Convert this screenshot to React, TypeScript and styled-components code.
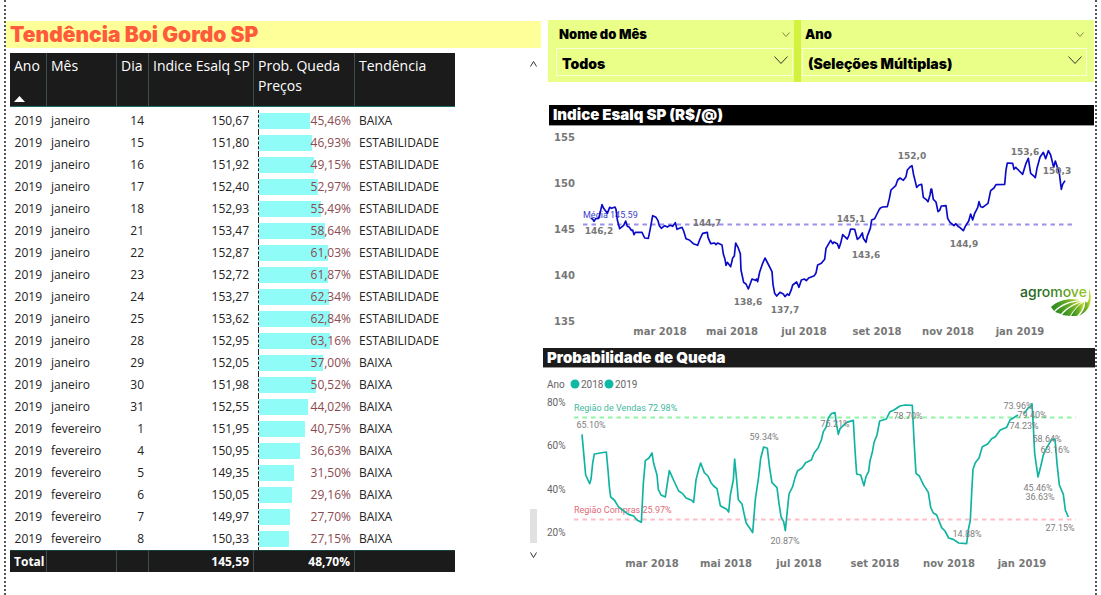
import React from "react";
import styled, { createGlobalStyle } from "styled-components";

const GlobalStyle = createGlobalStyle`
  *, *::before, *::after { box-sizing: border-box; }
  body { margin: 0; background: #fff; font-family: "Open Sans", "Noto Sans", sans-serif; }
`;

const HEAVY = '"Inter", "Liberation Sans", sans-serif';
const WIDE = '"DejaVu Sans", "Inter", sans-serif';
const DIN = '"Roboto", "Liberation Sans", sans-serif';

const Page = styled.main`
  display: grid;
  grid-template-columns: 537fr 552fr;
  min-height: 100vh;
  margin: 0 4px;
  padding-top: 20px;
  border-left: 2px dotted #555;
  border-right: 2px dotted #555;
`;

const Column = styled.section`
  min-width: 0;
`;

const ReportTitle = styled.h1`
  margin: 1px 2px 5px 0;
  padding-left: 4px;
  background: #ffff99;
  color: #ff5a3c;
  font: 900 21px/27px ${HEAVY};
`;

const TableArea = styled.div`
  display: flex;
  padding-left: 4px;
`;

const Table = styled.table`
  flex: 1;
  width: 100%;
  min-width: 0;
  table-layout: fixed;
  border-collapse: separate;
  border-spacing: 0;
  font-size: 12px;
  line-height: 20px;
  color: #222;
`;

const HeadCell = styled.th`
  height: 54px;
  padding: 3px 4px 0;
  vertical-align: top;
  text-align: left;
  white-space: nowrap;
  font-weight: 400;
  font-size: 14px;
  color: #fff;
  background: #1b1b1b;
  border-right: 1px solid #3f4f4f;
  border-bottom: 1px solid #1f6f6a;
  &:last-child { border-right: 0; }
`;

const SortMark = styled.svg`
  display: block;
  margin-top: 20px;
`;

const Cell = styled.td<{ $align?: string }>`
  height: 22px;
  padding: 0 5px 0 4px;
  text-align: ${(p) => p.$align ?? "left"};
  white-space: nowrap;
`;

const Spacer = styled.td`
  height: 3px;
  padding: 0;
`;

const BarCell = styled.td`
  padding: 0 4px;
  height: 22px;
`;

const BarTrack = styled.div`
  display: grid;
  align-items: center;
  height: 22px;
  border-left: 1px dashed #222;
  > * { grid-area: 1 / 1; }
`;

const Bar = styled.span`
  height: 16px;
  background: #8ffcf8;
`;

const BarValue = styled.span`
  text-align: right;
  color: #8c4a50;
`;

const FootCell = styled.td<{ $align?: string }>`
  height: 22px;
  padding: 0 4px;
  text-align: ${(p) => p.$align ?? "left"};
  font-weight: 700;
  color: #fff;
  background: #1b1b1b;
  border-right: 1px solid #3f4f4f;
  border-top: 1px solid #16423f;
  &:last-child { border-right: 0; }
`;

const ScrollGutter = styled.div`
  display: flex;
  flex: none;
  flex-direction: column;
  align-items: flex-end;
  width: 88px;
  padding: 8px 6px 14px 0;
`;

const ScrollThumb = styled.div`
  width: 7px;
  height: 34px;
  margin: auto 0 9px;
  background: #e1e1e1;
`;

const Slicers = styled.div`
  display: grid;
  grid-template-columns: 246fr 7px 293fr;
  margin: 0 1px 23px 5px;
  background: #eaff88;
`;

const Divider = styled.div`
  background: #d3f23f;
`;

const Slicer = styled.div<{ $left: number; $right: number }>`
  min-width: 0;
  padding: 4px ${(p) => p.$right}px 6px ${(p) => p.$left}px;
`;

const SlicerLabel = styled.label`
  display: flex;
  align-items: center;
  justify-content: space-between;
  height: 20px;
  padding: 0 3px;
  font: 900 13px/20px ${HEAVY};
`;

const SelectBox = styled.div`
  display: grid;
  align-items: center;
  height: 28px;
  margin-top: 4px;
  border: 1px solid #f7ffd6;
  > * { grid-area: 1 / 1; }
  > svg { justify-self: end; margin: 0 4px 4px 0; pointer-events: none; }
`;

const Select = styled.select`
  appearance: none;
  width: 100%;
  height: 26px;
  padding: 2px 24px 0 5px;
  border: 0;
  background: transparent;
  color: #000;
  font: 900 14px ${HEAVY};
`;

const PanelTitle = styled.h2<{ $soft?: boolean }>`
  margin: 0;
  padding-left: 4px;
  background: ${(p) => (p.$soft ? "#1b1b1b" : "#000")};
  border-bottom: 1px solid #999;
  color: #fff;
  font: 900 15px/${(p) => (p.$soft ? "19px" : "20px")} ${HEAVY};
`;

const IndexPanel = styled.section`
  margin: 0 1px 0 6px;
`;

const ChartSvg = styled.svg`
  display: block;
  width: 100%;
  height: auto;
`;

const AxisText = styled.text<{ $small?: boolean }>`
  font: 700 ${(p) => (p.$small ? 9 : 10)}px ${WIDE};
  fill: #777;
`;

const PointText = styled.text`
  font: 400 9px ${DIN};
  fill: #808080;
`;

const LegendText = styled.text`
  font: 400 10px ${DIN};
  fill: #666;
`;

const Brand = styled.text`
  font: 500 14px ${HEAVY};
`;

const rows: [string, number, string, number, string][] = [
  ["janeiro", 14, "150,67", 45.46, "BAIXA"],
  ["janeiro", 15, "151,80", 46.93, "ESTABILIDADE"],
  ["janeiro", 16, "151,92", 49.15, "ESTABILIDADE"],
  ["janeiro", 17, "152,40", 52.97, "ESTABILIDADE"],
  ["janeiro", 18, "152,93", 55.49, "ESTABILIDADE"],
  ["janeiro", 21, "153,47", 58.64, "ESTABILIDADE"],
  ["janeiro", 22, "152,87", 61.03, "ESTABILIDADE"],
  ["janeiro", 23, "152,72", 61.87, "ESTABILIDADE"],
  ["janeiro", 24, "153,27", 62.34, "ESTABILIDADE"],
  ["janeiro", 25, "153,62", 62.84, "ESTABILIDADE"],
  ["janeiro", 28, "152,95", 63.16, "ESTABILIDADE"],
  ["janeiro", 29, "152,05", 57.0, "BAIXA"],
  ["janeiro", 30, "151,98", 50.52, "BAIXA"],
  ["janeiro", 31, "152,55", 44.02, "BAIXA"],
  ["fevereiro", 1, "151,95", 40.75, "BAIXA"],
  ["fevereiro", 4, "150,95", 36.63, "BAIXA"],
  ["fevereiro", 5, "149,35", 31.5, "BAIXA"],
  ["fevereiro", 6, "150,05", 29.16, "BAIXA"],
  ["fevereiro", 7, "149,97", 27.7, "BAIXA"],
  ["fevereiro", 8, "150,33", 27.15, "BAIXA"],
];

const percent = (v: number) => v.toFixed(2).replace(".", ",") + "%";

// Series points are stored at three units per chart pixel.
const indexLine =
  "152,355 158,357 162,364 167,356 176,355 180,340 186,314 191,325 202,340 209,322 215,325 225,321 228,328 232,360 239,386 251,376 257,363 262,379 268,382 274,391 278,390 282,404 286,397 306,397 314,414 325,415 331,385 338,347 348,352 354,362 358,377 364,385 374,377 382,381 390,376 398,379 406,368 411,388 426,382 431,393 438,416 448,420 460,431 473,436 480,417 488,400 502,397 504,412 512,431 524,429 528,434 533,429 546,435 550,462 555,478 558,496 562,487 572,500 578,474 583,468 587,429 594,442 601,461 603,510 611,547 618,552 625,567 636,537 646,541 650,537 653,545 659,516 668,490 675,474 686,495 696,515 699,553 704,580 710,588 720,577 730,582 735,590 742,582 747,586 754,569 758,555 770,546 777,562 784,540 793,537 799,542 806,534 823,527 828,519 833,495 844,490 854,478 858,445 872,421 878,431 882,426 892,431 897,445 902,430 908,404 914,410 922,417 927,405 932,387 944,388 952,418 959,412 967,399 970,415 978,427 982,408 991,385 995,360 1004,356 1011,342 1017,330 1021,324 1028,321 1042,320 1048,296 1053,270 1067,257 1073,240 1080,234 1090,241 1098,230 1102,210 1110,201 1116,197 1121,225 1126,245 1130,262 1137,255 1145,253 1150,292 1158,298 1164,305 1170,285 1173,267 1175,267 1180,298 1188,306 1194,335 1199,331 1204,318 1218,317 1223,355 1230,367 1242,377 1247,371 1253,378 1260,383 1270,392 1276,379 1286,363 1292,342 1298,360 1304,340 1313,323 1317,305 1322,320 1328,322 1344,310 1352,272 1362,264 1368,254 1394,253 1398,210 1402,189 1418,190 1422,208 1427,202 1438,213 1448,223 1458,190 1465,175 1472,220 1480,227 1486,233 1491,205 1500,172 1510,157 1517,176 1525,152 1532,165 1541,202 1546,183 1553,205 1558,220 1564,268 1568,253 1575,242";

const fall2018 =
  "126,283 132,350 137,405 149,431 153,418 158,370 163,342 199,336 204,390 208,440 212,471 223,480 235,500 265,523 281,528 292,541 304,547 310,430 316,362 327,354 336,339 341,370 351,405 355,448 363,465 376,471 382,430 388,392 402,423 416,453 427,460 438,474 455,481 461,487 468,420 476,388 482,369 493,398 504,408 513,428 521,438 531,446 541,497 560,508 566,516 571,465 580,420 584,357 590,420 595,479 606,492 612,520 619,550 631,567 638,578 646,478 656,410 662,355 671,321 682,325 689,385 696,428 711,443 717,490 723,530 731,545 736,572 747,462 758,440 765,413 773,392 786,384 797,368 814,360 823,338 834,324 844,300 850,275 858,262 865,234 874,221 885,218 889,250 895,283 900,266 920,247 940,241 945,330 950,402 962,405 972,437 978,410 986,394 990,362 997,337 1002,308 1011,285 1019,243 1039,237 1050,215 1062,210 1080,198 1095,195 1117,196 1122,300 1128,400 1138,408 1150,434 1165,457 1172,502 1180,519 1190,525 1205,563 1215,573 1226,594 1240,598 1256,609 1280,611 1285,570 1291,540 1295,460 1299,388 1306,368 1317,354 1327,320 1343,312 1355,296 1366,290 1380,271 1400,262 1410,240 1434,225";
const fall2019 =
  "1452,221 1465,203 1472,200 1476,191 1480,260 1484,340 1494,411 1502,380 1510,345 1522,320 1535,299 1545,297 1551,370 1558,435 1570,463 1576,510 1585,531";

type Mark = [string, number, number];

const indexMarks: Mark[] = [
  ["146,2", 50, 108], ["144,7", 158, 100], ["138,6", 199, 179], ["137,7", 236, 187],
  ["145,1", 302, 96], ["143,6", 317, 132], ["152,0", 363, 33], ["144,9", 415, 121],
  ["153,6", 476, 29], ["150,3", 508, 48],
];
const indexMonths: Mark[] = [
  ["mar 2018", 111, 209], ["mai 2018", 183, 209], ["jul 2018", 255, 209],
  ["set 2018", 328, 209], ["nov 2018", 399, 209], ["jan 2019", 471, 209],
];
const fallMarks: Mark[] = [
  ["65.10%", 48, 60], ["59.34%", 221, 72], ["20.87%", 242, 176], ["75.21%", 292, 59],
  ["78.70%", 365, 51], ["14.88%", 424, 169], ["73.96%", 475, 41], ["79.40%", 489, 50],
  ["74.23%", 481, 61], ["58.64%", 504, 74], ["63.16%", 512, 85], ["45.46%", 495, 123],
  ["36.63%", 497, 132], ["27.15%", 517, 163],
];
const fallMonths: Mark[] = [
  ["mar 2018", 109, 199], ["mai 2018", 183, 199], ["jul 2018", 256, 199],
  ["set 2018", 332, 199], ["nov 2018", 406, 199], ["jan 2019", 479, 199],
];

function Chevron({ w, h, up, color = "#333" }: { w: number; h: number; up?: boolean; color?: string }) {
  const d = up ? `M.5 ${h - 0.5}L${w / 2} .5L${w - 0.5} ${h - 0.5}` : `M.5 .5L${w / 2} ${h - 0.5}L${w - 0.5} .5`;
  return (
    <svg width={w} height={h} viewBox={`0 0 ${w} ${h}`} fill="none" stroke={color} aria-hidden="true">
      <path d={d} />
    </svg>
  );
}

function TrendTable() {
  return (
    <Table>
      <colgroup>
        {[37, 70, 32, 105, 101, 100].map((w, i) => (
          <col key={i} style={{ width: `${(w / 445) * 100}%` }} />
        ))}
      </colgroup>
      <thead>
        <tr>
          <HeadCell>
            Ano
            <SortMark width="11" height="6" viewBox="0 0 11 6" aria-hidden="true">
              <path d="M0 6L5.500 0L11 6Z" fill="#fff" />
            </SortMark>
          </HeadCell>
          <HeadCell>Mês</HeadCell>
          <HeadCell>Dia</HeadCell>
          <HeadCell>Indice Esalq SP</HeadCell>
          <HeadCell>Prob. Queda<br />Preços</HeadCell>
          <HeadCell>Tendência</HeadCell>
        </tr>
      </thead>
      <tbody>
        <tr><Spacer colSpan={6} /></tr>
        {rows.map(([month, day, index, fall, trend]) => (
          <tr key={month + day}>
            <Cell $align="right">2019</Cell>
            <Cell>{month}</Cell>
            <Cell $align="right">{day}</Cell>
            <Cell $align="right">{index}</Cell>
            <BarCell>
              <BarTrack>
                <Bar style={{ width: `${fall * 1.22}%` }} />
                <BarValue>{percent(fall)}</BarValue>
              </BarTrack>
            </BarCell>
            <Cell>{trend}</Cell>
          </tr>
        ))}
      </tbody>
      <tfoot>
        <tr>
          <FootCell>Total</FootCell>
          <FootCell />
          <FootCell />
          <FootCell $align="right">145,59</FootCell>
          <FootCell $align="right">48,70%</FootCell>
          <FootCell />
        </tr>
      </tfoot>
    </Table>
  );
}

function Logo() {
  return (
    <g>
      <defs>
        <linearGradient id="brandText" x1="0" x2="1">
          <stop offset="0" stopColor="#1d5a1c" />
          <stop offset=".45" stopColor="#2f7a20" />
          <stop offset="1" stopColor="#9ccb2a" />
        </linearGradient>
        <linearGradient id="brandLeaf" x1="0" x2="1">
          <stop offset="0" stopColor="#23861f" />
          <stop offset=".6" stopColor="#6fb024" />
          <stop offset="1" stopColor="#d8e23a" />
        </linearGradient>
      </defs>
      <Brand x="471" y="171" fill="url(#brandText)">agromove</Brand>
      <g fill="url(#brandLeaf)">
        <path d="M502 181C509 174 520 172 531 174C520 175 512 178 505 185Z" />
        <path d="M506 186C513 179 522 176 532 175C524 178 517 182 512 188Z" />
        <path d="M513 189C519 182 526 178 533 176C529 180 524 184 521 190Z" />
        <path d="M522 190C525 184 530 179 535 176C535 181 532 186 528 190Z" />
        <path d="M530 190C534 186 537 180 536 175C539 180 541 172 540 162C544 173 542 184 530 190Z" />
      </g>
    </g>
  );
}

function IndexChart() {
  return (
    <ChartSvg viewBox="0 0 545 222" role="img" aria-label="Indice Esalq SP">
      {[155, 150, 145, 140, 135].map((v, i) => (
        <AxisText key={v} x="5" y={15 + i * 46}>{v}</AxisText>
      ))}
      <line x1="34" x2="524" y1="98.500" y2="98.500" stroke="#9b90ea" strokeWidth="2" strokeDasharray="4.500 4" />
      <PointText x="34" y="92" style={{ fill: "#3c40c4" }}>Média 145.59</PointText>
      <g transform="translate(-9 -26) scale(.33333)">
        <polyline points={indexLine} fill="none" stroke="#0a0ac8" strokeWidth="5" strokeLinejoin="round" />
      </g>
      {indexMarks.map(([t, x, y]) => (
        <AxisText key={t} x={x} y={y} $small textAnchor="middle">{t}</AxisText>
      ))}
      {indexMonths.map(([t, x, y]) => (
        <AxisText key={t} x={x} y={y} textAnchor="middle">{t}</AxisText>
      ))}
      <Logo />
    </ChartSvg>
  );
}

function FallChart() {
  return (
    <ChartSvg viewBox="0 0 552 220" role="img" aria-label="Probabilidade de Queda">
      <LegendText x="4" y="20">Ano</LegendText>
      <circle cx="32" cy="16" r="4.500" fill="#0fb9a6" />
      <LegendText x="38" y="20">2018</LegendText>
      <circle cx="66" cy="16" r="4.500" fill="#0fb9a6" />
      <LegendText x="72" y="20">2019</LegendText>
      {["80%", "60%", "40%", "20%"].map((t, i) => (
        <LegendText key={t} x="4" y={38 + Math.round(i * 43.3)}>{t}</LegendText>
      ))}
      <g strokeWidth="2" strokeDasharray="4.500 4">
        <line x1="31" x2="533" y1="49.500" y2="49.500" stroke="#8ff5a4" />
        <line x1="31" x2="533" y1="151.500" y2="151.500" stroke="#ffbcc6" />
      </g>
      <PointText x="31" y="43" style={{ fill: "#45b89e" }}>Região de Vendas 72.98%</PointText>
      <PointText x="31" y="145" style={{ fill: "#e06a78" }}>Região Compras 25.97%</PointText>
      <g transform="translate(-3 -28) scale(.33333)" fill="none" stroke="#10b3a1" strokeWidth="5" strokeLinejoin="round">
        <polyline points={fall2018} />
        <polyline points={fall2019} />
      </g>
      {fallMarks.map(([t, x, y]) => (
        <PointText key={t} x={x} y={y} textAnchor="middle">{t}</PointText>
      ))}
      {fallMonths.map(([t, x, y]) => (
        <AxisText key={t} x={x} y={y} textAnchor="middle">{t}</AxisText>
      ))}
    </ChartSvg>
  );
}

export default function App() {
  return (
    <>
      <GlobalStyle />
      <Page>
        <Column>
          <ReportTitle>Tendência Boi Gordo SP</ReportTitle>
          <TableArea>
            <TrendTable />
            <ScrollGutter>
              <Chevron w={7} h={6} up />
              <ScrollThumb />
              <Chevron w={7} h={6} />
            </ScrollGutter>
          </TableArea>
        </Column>
        <Column>
          <Slicers>
            <Slicer $left={8} $right={1}>
              <SlicerLabel htmlFor="month">
                Nome do Mês <Chevron w={8} h={5} color="#7c8a44" />
              </SlicerLabel>
              <SelectBox>
                <Select id="month"><option>Todos</option></Select>
                <Chevron w={14} h={8} />
              </SelectBox>
            </Slicer>
            <Divider />
            <Slicer $left={1} $right={7}>
              <SlicerLabel htmlFor="year">
                Ano <Chevron w={8} h={5} color="#7c8a44" />
              </SlicerLabel>
              <SelectBox>
                <Select id="year"><option>(Seleções Múltiplas)</option></Select>
                <Chevron w={14} h={8} />
              </SelectBox>
            </Slicer>
          </Slicers>
          <IndexPanel>
            <PanelTitle>Indice Esalq SP (R$/@)</PanelTitle>
            <IndexChart />
          </IndexPanel>
          <PanelTitle $soft>Probabilidade de Queda</PanelTitle>
          <FallChart />
        </Column>
      </Page>
    </>
  );
}
